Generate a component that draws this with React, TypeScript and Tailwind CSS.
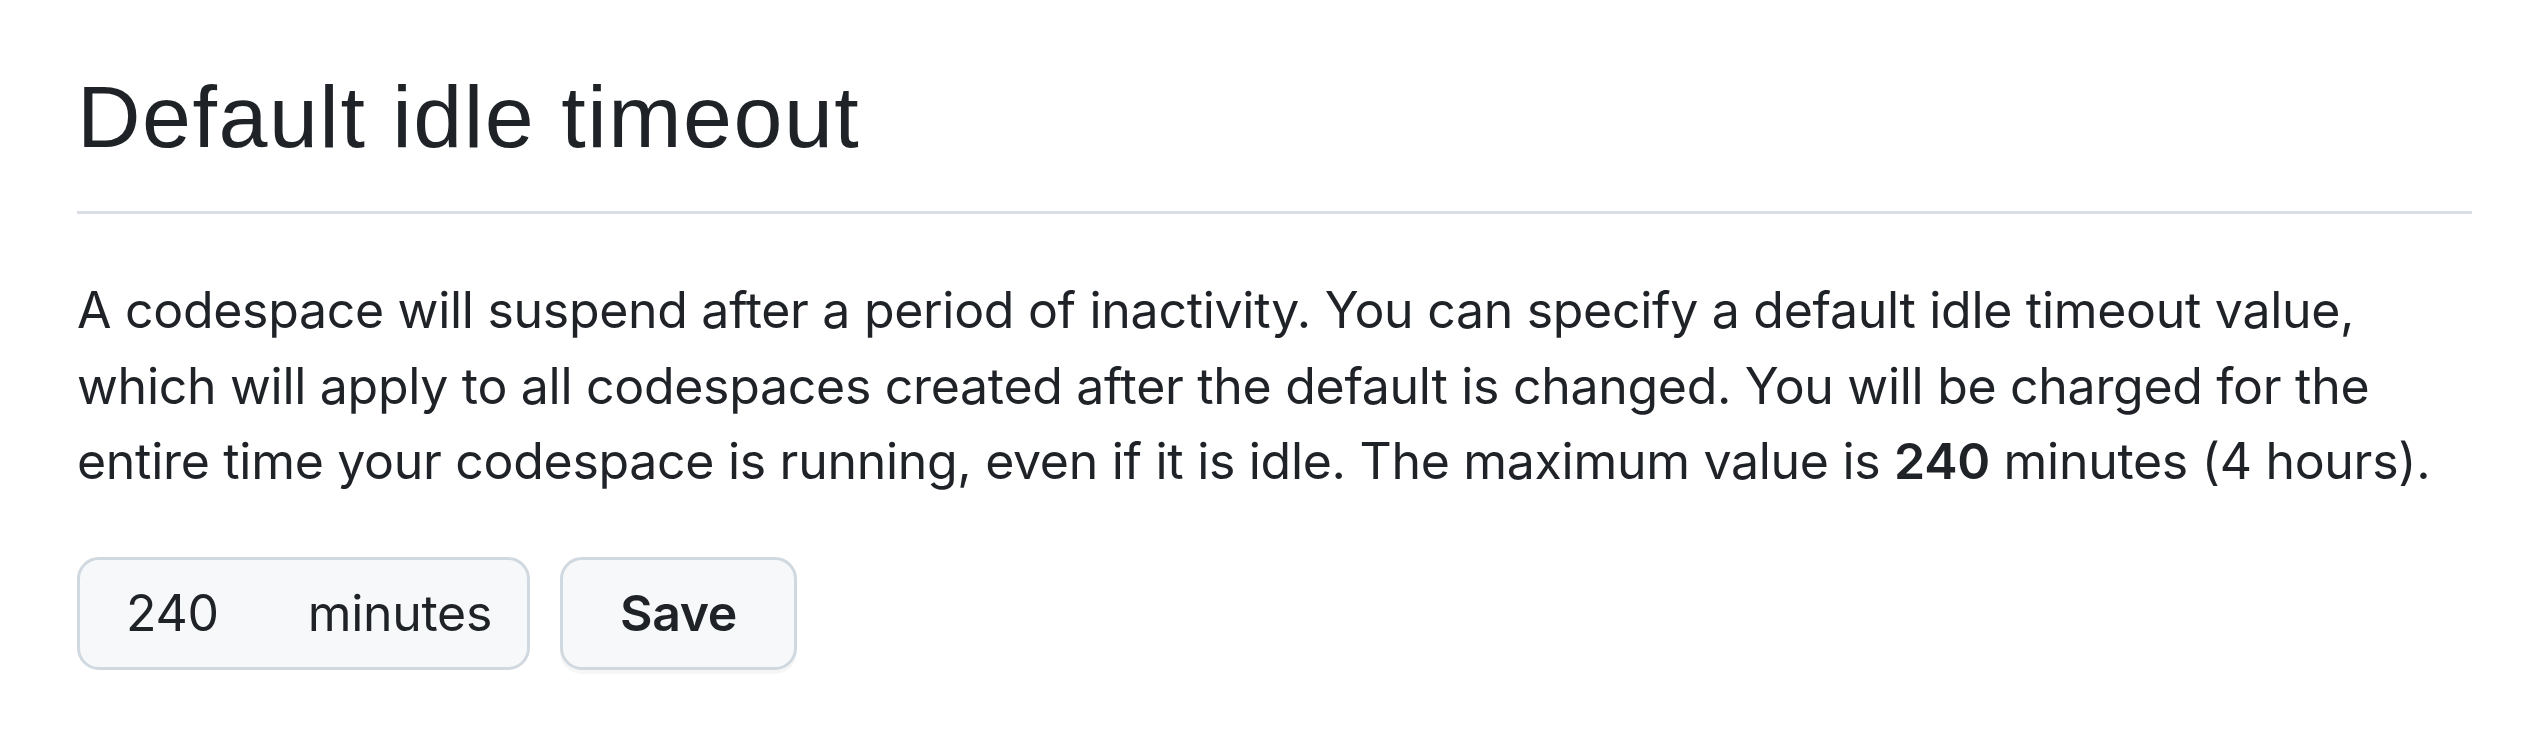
import React from "react";

const body = { fontFamily: "Inter, 'Noto Sans', sans-serif" };

const App = () => {
  return (
    <div className="min-h-screen bg-white text-[#1f2328] pl-[77px] pr-[53px]" style={body}>
      {/* heading */}
      <div className="pt-[62px] pb-[39px] border-b-[3px] border-[#d8dee4]">
        <h2
          className="text-[88px] leading-[110px] font-normal tracking-[1.5px]"
          style={{ fontFamily: "'Liberation Sans', Arial, sans-serif" }}
        >
          Default idle timeout
        </h2>
      </div>

      <p className="mt-[59px] text-[50px] leading-[75.5px] tracking-[-0.3px]">
        A codespace will suspend after a period of inactivity. You can specify a default idle
        timeout value, which will apply to all codespaces created after the default is changed.
        You will be charged for the entire time your codespace is running, even if it is idle.
        The maximum value is <b className="font-semibold">240</b> minutes (4 hours).
      </p>

      {/* timeout input & save */}
      <div className="mt-[57px] flex gap-[30px] items-start text-[50px] tracking-[-0.3px]">
        <label className="w-[453px] h-[113px] flex items-center pl-[46px] pr-[35px] bg-[#f6f8fa] border-[3px] border-[#d1d9e0] rounded-[22px]">
          <span className="w-[184px]">240</span>
          <span>minutes</span>
        </label>
        <button className="w-[237px] h-[113px] flex items-center justify-center bg-[#f6f8fa] border-[3px] border-[#d1d9e0] rounded-[22px] font-semibold shadow-[0_4px_0_rgba(31,35,40,0.04)]">
          Save
        </button>
      </div>
    </div>
  );
};

export default App;
